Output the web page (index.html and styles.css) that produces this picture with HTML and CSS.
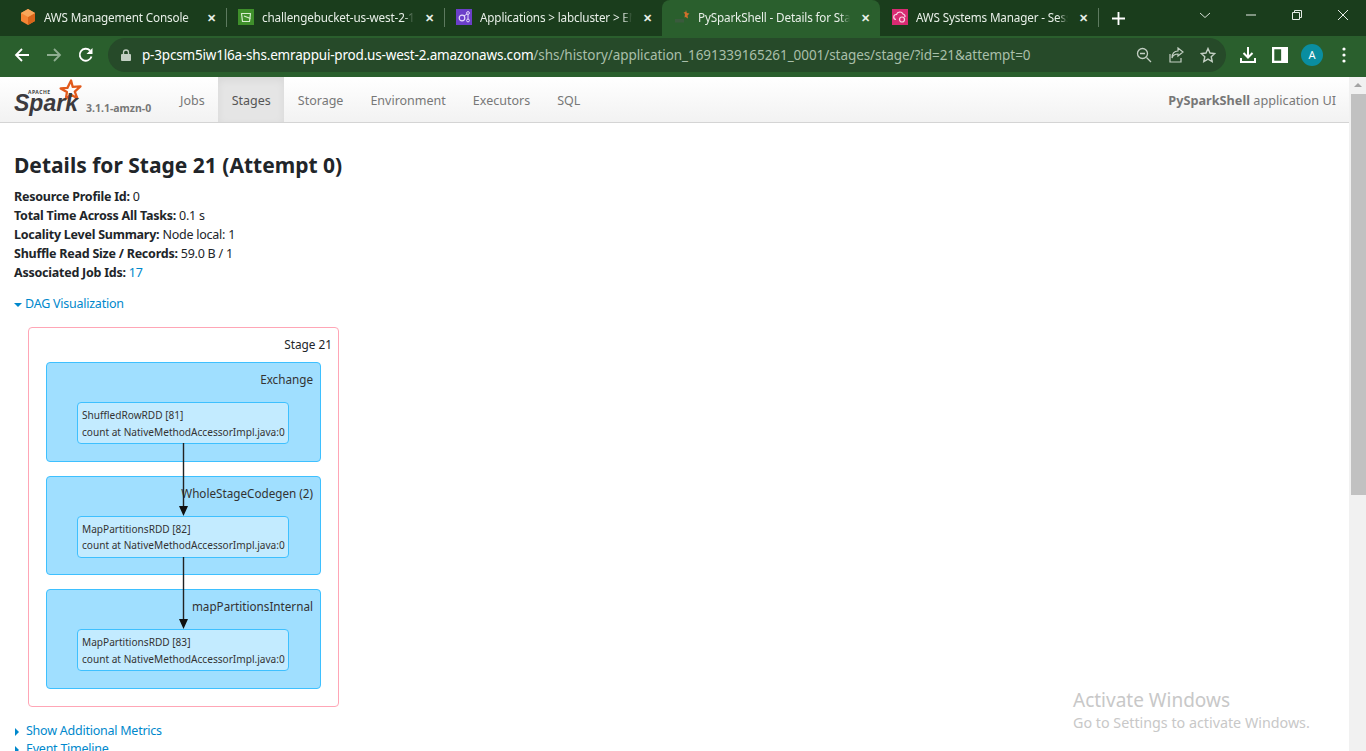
FILE: index.html
```html
<!DOCTYPE html>
<html lang="en">
<head>
  <meta charset="UTF-8">
  <title>PySparkShell - Details for Stage 21 (Attempt 0)</title>
  <link rel="stylesheet" href="styles.css">
</head>
<body>
  <!-- Browser tabs -->
  <div class="tabstrip">
    <div class="tab">
      <svg class="favicon" viewBox="0 0 16 16"><path d="M8 0l7 4v8l-7 4-7-4V4z" fill="#f58534"/><path d="M8 8l7-4v8l-7 4z" fill="#d9651a"/><path d="M8 0l7 4-7 4-7-4z" fill="#f9a65a"/></svg>
      <span class="tab-title">AWS Management Console</span>
      <span class="tab-close">&#10005;</span>
    </div>
    <div class="tab">
      <svg class="favicon" viewBox="0 0 16 16"><rect width="16" height="16" fill="#3f8f2b"/><path d="M3.500 4.500h9l-1 8h-7z" fill="none" stroke="#d7ecd0" stroke-width="1.200" stroke-linejoin="round"/><path d="M6 7l6.500 2.500" stroke="#d7ecd0" stroke-width="1.200"/></svg>
      <span class="tab-title">challengebucket-us-west-2-1691339</span>
      <span class="tab-close">&#10005;</span>
    </div>
    <div class="tab">
      <svg class="favicon" viewBox="0 0 16 16"><rect width="16" height="16" fill="#6b3fc9"/><circle cx="6" cy="9" r="2.800" fill="none" stroke="#e4d9fb" stroke-width="1.200"/><circle cx="12" cy="4" r="1.400" fill="none" stroke="#e4d9fb"/><circle cx="12" cy="11.500" r="1.400" fill="none" stroke="#e4d9fb"/><path d="M8 7l3-2M12 5.500v4.500" stroke="#e4d9fb"/></svg>
      <span class="tab-title">Applications &gt; labcluster &gt; EMR Studio</span>
      <span class="tab-close">&#10005;</span>
    </div>
    <div class="tab tab-active">
      <svg class="favicon" viewBox="0 0 16 16"><path d="M12 1l.800 3 2.700.500-2 2 .500 3-2.500-1.500-1 .500.500-3.500-1.500-1.500 2-.500z" fill="#d0702c"/><path d="M1 10h9v3.500H1z" fill="#3a5a3d"/></svg>
      <span class="tab-title">PySparkShell - Details for Stage 21</span>
      <span class="tab-close">&#10005;</span>
    </div>
    <div class="tab tab-last">
      <svg class="favicon" viewBox="0 0 16 16"><rect width="16" height="16" fill="#d92b72"/><path d="M4 10.500a2.500 2.500 0 0 1 .500-5 3.500 3.500 0 0 1 6.500-.500 2.800 2.800 0 0 1 2 3" fill="none" stroke="#f9d5e5" stroke-width="1.200"/><circle cx="10" cy="10.500" r="2.500" fill="none" stroke="#f9d5e5" stroke-width="1.200"/></svg>
      <span class="tab-title">AWS Systems Manager - Session Manager</span>
      <span class="tab-close">&#10005;</span>
    </div>
    <svg class="new-tab" viewBox="0 0 14 14"><path d="M7 0v14M0 7h14" stroke="#fff" stroke-width="2"/></svg>
    <div class="window-controls">
      <svg viewBox="0 0 12 12"><path d="M1 4l5 4.500 5-4.500" fill="none" stroke="#d5dfd5"/></svg>
      <svg viewBox="0 0 12 12"><path d="M1 6h10" stroke="#e6ece6"/></svg>
      <svg viewBox="0 0 12 12"><path d="M1.500 3.500h7v7h-7zM3.500 3.500v-2h7v7h-2" fill="none" stroke="#e6ece6"/></svg>
      <svg viewBox="0 0 12 12"><path d="M1 1l10 10M11 1L1 11" stroke="#e6ece6"/></svg>
    </div>
  </div>

  <!-- Address bar -->
  <div class="toolbar">
    <div class="nav-buttons">
      <svg viewBox="0 0 16 16"><path d="M15 8H2M8 2L2 8l6 6" fill="none" stroke="#fff" stroke-width="1.800"/></svg>
      <svg viewBox="0 0 16 16"><path d="M1 8h13M8 2l6 6-6 6" fill="none" stroke="#8fae91" stroke-width="1.800"/></svg>
      <svg viewBox="0 0 16 16"><path d="M13.500 9.500A6 6 0 1 1 12 3.500" fill="none" stroke="#fff" stroke-width="1.800"/><path d="M14.500 1v6h-6z" fill="#fff"/></svg>
    </div>
    <div class="omnibox">
      <svg class="lock" viewBox="0 0 10 12"><rect y="5" width="10" height="7" rx="1" fill="#c3cfc3"/><path d="M2.500 5V3.500a2.500 2.500 0 0 1 5 0V5" fill="none" stroke="#c3cfc3" stroke-width="1.300"/></svg>
      <span class="url"><span class="url-host">p-3pcsm5iw1l6a-shs.emrappui-prod.us-west-2.amazonaws.com</span>/shs/history/application_1691339165261_0001/stages/stage/?id=21&amp;attempt=0</span>
      <div class="omni-icons">
        <svg viewBox="0 0 16 16"><circle cx="6.500" cy="6.500" r="5" fill="none" stroke="#c3cfc3" stroke-width="1.300"/><path d="M4 6.500h5M10.500 10.500l4.500 4.500" stroke="#c3cfc3" stroke-width="1.300"/></svg>
        <svg viewBox="0 0 16 16"><path d="M2 7v8h11v-4" fill="none" stroke="#c3cfc3" stroke-width="1.200"/><path d="M10 1l5 4-5 4V7c-3 0-5 1-6 4 0-4 2-7 6-7z" fill="none" stroke="#c3cfc3" stroke-width="1.200"/></svg>
        <svg viewBox="0 0 16 16"><path d="M8 1.500l2 4.500 4.800.5-3.600 3.200 1 4.800L8 12.100l-4.200 2.400 1-4.800L1.200 6.500 6 6z" fill="none" stroke="#c3cfc3" stroke-width="1.400"/></svg>
      </div>
    </div>
    <div class="toolbar-actions">
      <svg viewBox="0 0 16 16"><path d="M8 0v10M3.500 6L8 10.500 12.500 6" fill="none" stroke="#fff" stroke-width="2"/><path d="M1 11v4h14v-4" fill="none" stroke="#fff" stroke-width="2"/></svg>
      <svg class="panel-icon" viewBox="0 0 14 14"><rect x="1" y="1" width="12" height="12" fill="none" stroke="#fff" stroke-width="2"/><rect x="8" y="1" width="5" height="12" fill="#fff"/></svg>
      <span class="avatar">A</span>
      <svg class="menu-dots" viewBox="0 0 4 16"><circle cx="2" cy="2" r="1.600" fill="#fff"/><circle cx="2" cy="8" r="1.600" fill="#fff"/><circle cx="2" cy="14" r="1.600" fill="#fff"/></svg>
    </div>
  </div>

  <div class="viewport">
    <div class="page">
      <!-- Spark navbar -->
      <nav class="navbar">
        <div class="brand">
          <div class="logo">
            <svg class="logo-star" viewBox="0 0 24 22"><path d="M14 1.500l1.500 6 7.500-.5-5.500 5 2.500 6.500-6-3.500-5 4 1-6.500L4 9l6.500-.5z" fill="none" stroke="#e25a1c" stroke-width="2.200" stroke-linejoin="round"/></svg>
            <span class="logo-apache">APACHE</span>
            <span class="logo-spark">Spark</span>
          </div>
          <span class="version">3.1.1-amzn-0</span>
        </div>
        <ul class="nav-links">
          <li>Jobs</li>
          <li class="active">Stages</li>
          <li>Storage</li>
          <li>Environment</li>
          <li>Executors</li>
          <li>SQL</li>
        </ul>
        <p class="app-name"><strong>PySparkShell</strong> application UI</p>
      </nav>

      <main class="content">
        <h3 class="page-title">Details for Stage 21 (Attempt 0)</h3>
        <ul class="summary">
          <li><strong>Resource Profile Id:</strong> 0</li>
          <li><strong>Total Time Across All Tasks:</strong> 0.1 s</li>
          <li><strong>Locality Level Summary:</strong> Node local: 1</li>
          <li><strong>Shuffle Read Size / Records:</strong> 59.0 B / 1</li>
          <li><strong>Associated Job Ids:</strong> <a href="#">17</a></li>
        </ul>

        <a class="toggle" href="#"><span class="arrow-down"></span>DAG Visualization</a>

        <!-- DAG -->
        <div class="dag-stage">
          <div class="stage-label">Stage 21</div>
          <div class="cluster">
            <div class="cluster-label">Exchange</div>
            <div class="rdd">ShuffledRowRDD [81]<br>count at NativeMethodAccessorImpl.java:0</div>
          </div>
          <div class="cluster">
            <div class="cluster-label">WholeStageCodegen (2)</div>
            <div class="rdd">MapPartitionsRDD [82]<br>count at NativeMethodAccessorImpl.java:0</div>
          </div>
          <div class="cluster">
            <div class="cluster-label">mapPartitionsInternal</div>
            <div class="rdd">MapPartitionsRDD [83]<br>count at NativeMethodAccessorImpl.java:0</div>
          </div>
          <svg class="dag-edges" width="311" height="380" viewBox="0 0 311 380">
            <path d="M155.500 116v65M155.500 230v65" stroke="#222" stroke-width="1.400"/>
            <path d="M151 179h9l-4.500 10zM151 292h9l-4.500 10z" fill="#111"/>
          </svg>
        </div>

        <a class="toggle toggle-metrics" href="#"><span class="arrow-right"></span>Show Additional Metrics</a>
        <a class="toggle toggle-timeline" href="#"><span class="arrow-right"></span>Event Timeline</a>
      </main>
    </div>

    <div class="scrollbar">
      <span class="scroll-up"></span>
      <div class="scroll-thumb"></div>
    </div>

    <div class="watermark">
      <div class="watermark-title">Activate Windows</div>
      <div class="watermark-sub">Go to Settings to activate Windows.</div>
    </div>
  </div>
</body>
</html>
```

FILE: styles.css
```css
/* General */
html, body {
  height: 100%;
}

body {
  margin: 0;
  overflow: hidden;
  background: #fff;
  color: #212529;
  font-family: "Noto Sans", "Open Sans", sans-serif;
  font-size: 12.500px;
  letter-spacing: -0.24px;
}

svg {
  display: block;
}

/* Tab strip */
.tabstrip {
  display: flex;
  align-items: center;
  height: 36px;
  padding-left: 8px;
  background: #1a3d1c;
  color: #e8efe8;
}

.tab {
  position: relative;
  display: flex;
  align-items: center;
  flex: none;
  width: 218px;
  height: 36px;
  box-sizing: border-box;
  padding: 0 8px 2px 12px;
  font-size: 11.700px;
  letter-spacing: -0.15px;
}

.tab::after {
  content: "";
  position: absolute;
  right: -1px;
  top: 8px;
  width: 1px;
  height: 19px;
  background: #5d7a5f;
}

.tab-active {
  background: #2a5f2d;
  border-radius: 8px 8px 0 0;
}

.tab-active::after {
  display: none;
}

.favicon {
  flex: none;
  width: 16px;
  height: 16px;
  margin-right: 8px;
}

.tab-title {
  flex: 1;
  overflow: hidden;
  white-space: nowrap;
  -webkit-mask-image: linear-gradient(to right, #000 calc(100% - 10px), transparent);
  mask-image: linear-gradient(to right, #000 calc(100% - 10px), transparent);
}

.tab-close {
  flex: none;
  width: 14px;
  margin-left: 8px;
  font-size: 11px;
  font-weight: 700;
  text-align: center;
}

.new-tab {
  flex: none;
  width: 13px;
  height: 13px;
  margin-left: 14px;
}

.window-controls {
  display: flex;
  gap: 34px;
  margin-left: auto;
  padding-right: 17px;
  padding-bottom: 6px;
}

.window-controls svg {
  width: 12px;
  height: 12px;
}

/* Toolbar */
.toolbar {
  display: flex;
  align-items: center;
  height: 41px;
  box-sizing: border-box;
  padding-bottom: 3px;
  background: #2a5f2d;
}

.nav-buttons {
  display: flex;
  gap: 16px;
  flex: none;
  width: 108px;
  box-sizing: border-box;
  padding-left: 14px;
}

.nav-buttons svg {
  width: 16px;
  height: 16px;
}

.omnibox {
  display: flex;
  align-items: center;
  width: 1118px;
  height: 34px;
  box-sizing: border-box;
  padding: 0 10px 0 13px;
  border-radius: 17px;
  background: #264a29;
  color: #a9bfaa;
  font-size: 13.500px;
}

.lock {
  flex: none;
  width: 10px;
  height: 12px;
  margin-right: 11px;
}

.url {
  letter-spacing: -0.06px;
  white-space: nowrap;
}

.url-host {
  color: #fff;
  letter-spacing: -0.19px;
}

.omni-icons {
  display: flex;
  gap: 16px;
  margin-left: auto;
}

.omni-icons svg {
  width: 16px;
  height: 16px;
}

.toolbar-actions {
  display: flex;
  align-items: center;
  padding-left: 14px;
}

.toolbar-actions svg {
  width: 16px;
  height: 16px;
  margin-right: 16px;
}

.toolbar-actions .panel-icon {
  margin-right: 13px;
}

.toolbar-actions .menu-dots {
  width: 4px;
  margin: 0 0 0 19px;
}

.avatar {
  width: 22px;
  height: 22px;
  border-radius: 50%;
  background: #0a8ea0;
  color: #fff;
  font-size: 11px;
  line-height: 22px;
  text-align: center;
}

/* Viewport */
.viewport {
  position: relative;
  display: flex;
  height: 674px;
  overflow: hidden;
}

.page {
  flex: 1;
  min-width: 0;
}

.scrollbar {
  flex: none;
  width: 17px;
  background: #f1f1f1;
}

.scroll-up {
  display: block;
  width: 0;
  margin: 6px auto 0;
  border-left: 4px solid transparent;
  border-right: 4px solid transparent;
  border-bottom: 4px solid #a3a3a3;
}

.scroll-thumb {
  width: 15px;
  height: 401px;
  margin: 7px 0 0 2px;
  background: #c1c1c1;
}

.watermark {
  position: absolute;
  left: 1073px;
  top: 611px;
  color: #c8c8c8;
  letter-spacing: 0;
  white-space: nowrap;
}

.watermark-title {
  font-size: 19px;
  line-height: 24px;
}

.watermark-sub {
  font-size: 14.300px;
  line-height: 21px;
}

/* Spark navbar */
.navbar {
  display: flex;
  align-items: stretch;
  height: 46px;
  box-sizing: border-box;
  padding: 0 13px 0 14px;
  border-bottom: 1px solid #d4d4d4;
  background: linear-gradient(to bottom, #fff, #f2f2f2);
  color: #777;
}

.brand {
  display: flex;
  flex: none;
  width: 152.500px;
}

.logo {
  position: relative;
  width: 70px;
}

.logo-star {
  position: absolute;
  left: 42px;
  top: 2px;
  width: 26px;
  height: 23px;
}

.logo-apache {
  position: absolute;
  left: 14px;
  top: 12px;
  color: #444;
  font-size: 5px;
  font-weight: 700;
  letter-spacing: 0.5px;
}

.logo-spark {
  position: absolute;
  left: 0;
  top: 15px;
  color: #3c3a3e;
  font-family: "Liberation Sans", sans-serif;
  font-size: 23px;
  font-style: italic;
  font-weight: 700;
  line-height: 23px;
  letter-spacing: 0;
}

.version {
  margin: 24px 0 0 2px;
  font-size: 10.500px;
  font-weight: 700;
  letter-spacing: 0;
  white-space: nowrap;
}

.nav-links {
  display: flex;
  margin: 0;
  padding: 0;
  letter-spacing: 0;
  list-style: none;
}

.nav-links li {
  padding: 0 13.500px;
  line-height: 47px;
}

.nav-links .active {
  background: #e5e5e5;
  box-shadow: inset 0 3px 8px rgba(0, 0, 0, 0.06);
  color: #555;
}

.app-name {
  margin: 0 0 0 auto;
  font-size: 12.700px;
  line-height: 47px;
  letter-spacing: 0;
}

/* Page content */
.content {
  padding: 0 14px;
}

.page-title {
  margin: 28px 0 0;
  font-size: 21px;
  font-weight: 700;
  line-height: 29px;
  letter-spacing: 0;
}

.summary {
  margin: 7px 0 0;
  padding: 0;
  list-style: none;
  line-height: 19px;
}

a {
  color: #0088cc;
  text-decoration: none;
}

.toggle {
  display: block;
  line-height: 19px;
  white-space: nowrap;
}

.summary + .toggle {
  margin-top: 12px;
}

.arrow-down,
.arrow-right {
  display: inline-block;
  width: 0;
  margin-right: 3px;
  vertical-align: middle;
}

.arrow-down {
  border-left: 4px solid transparent;
  border-right: 4px solid transparent;
  border-top: 4px solid #0088cc;
}

.arrow-right {
  margin-left: 1px;
  margin-right: 7px;
  border-top: 4px solid transparent;
  border-bottom: 4px solid transparent;
  border-left: 4px solid #0088cc;
}

/* DAG */
.dag-stage {
  position: relative;
  display: flex;
  flex-direction: column;
  gap: 14px;
  width: 311px;
  height: 380px;
  box-sizing: border-box;
  margin: 14px 0 0 14px;
  padding: 34px 17px 0;
  border: 1px solid #ffa6b6;
  border-radius: 4px;
  background: #fff;
}

.stage-label {
  position: absolute;
  right: 6px;
  top: 8px;
  font-size: 11.800px;
  letter-spacing: 0;
}

.cluster {
  flex: none;
  height: 99.500px;
  box-sizing: border-box;
  padding: 8px 7px 0 30px;
  border: 1px solid #3ec0ff;
  border-radius: 4px;
  background: #a0dfff;
}

.cluster-label {
  height: 31px;
  color: #333;
  font-size: 11.700px;
  letter-spacing: 0;
  text-align: right;
  white-space: nowrap;
}

.rdd {
  width: 212px;
  height: 42px;
  box-sizing: border-box;
  padding: 4px 4px 0;
  border: 1px solid #3ec0ff;
  border-radius: 4px;
  background: #c3ebff;
  color: #333;
  font-size: 10.100px;
  line-height: 16.500px;
  letter-spacing: 0;
  white-space: nowrap;
}

.dag-edges {
  position: absolute;
  left: -1px;
  top: -1px;
}

.toggle-metrics {
  margin-top: 14px;
}

.toggle-timeline {
  margin-top: -1px;
}
```
